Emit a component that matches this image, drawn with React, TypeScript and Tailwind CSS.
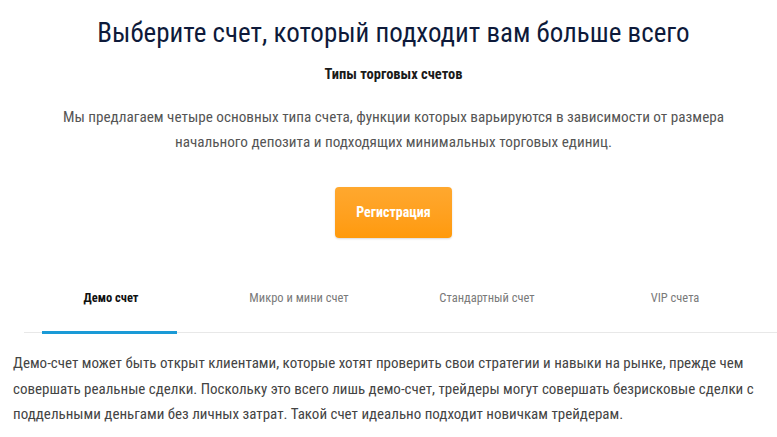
import React, { useState } from 'react';

const tabs = [
  {
    id: 'demo',
    label: 'Демо счет',
    text: 'Демо-счет может быть открыт клиентами, которые хотят проверить свои стратегии и навыки на рынке, прежде чем совершать реальные сделки. Поскольку это всего лишь демо-счет, трейдеры могут совершать безрисковые сделки с поддельными деньгами без личных затрат. Такой счет идеально подходит новичкам трейдерам.',
  },
  { id: 'micro', label: 'Микро и мини счет', text: '' },
  { id: 'standard', label: 'Стандартный счет', text: '' },
  { id: 'vip', label: 'VIP счета', text: '' },
];

export default function App() {
  const [active, setActive] = useState('demo');
  const current = tabs.find((t) => t.id === active)!;

  return (
    <div className="w-[777px] h-[437px] overflow-hidden bg-white font-['Roboto_Condensed','Roboto',sans-serif]">
      {/* Header */}
      <div className="flex flex-col items-center text-center pl-[10px]">
        <h1 className="mt-[13px] text-[27px] leading-[40px] text-[#0e1a3a] whitespace-nowrap">
          Выберите счет, который подходит вам больше всего
        </h1>
        <h3 className="mt-[12px] text-[14.5px] leading-[20px] font-bold text-[#1a1a1a]">
          Типы торговых счетов
        </h3>
        <p className="mt-[20px] w-[680px] text-[15.2px] leading-[25px] text-[#555]">
          Мы предлагаем четыре основных типа счета, функции которых варьируются в зависимости от размера начального депозита и подходящих минимальных торговых единиц.
        </p>
        <button className="mt-[32px] w-[117px] h-[51px] rounded-[4px] bg-gradient-to-b from-[#ffa82e] to-[#ff9a0a] text-white text-[14px] font-bold shadow-[0_1px_2px_rgba(0,0,0,0.15)]">
          Регистрация
        </button>
      </div>

      {/* Tabs */}
      <div className="mt-[50px] ml-[24px] flex border-b border-[#e8e8e8]">
        {tabs.map((t) => (
          <button
            key={t.id}
            onClick={() => setActive(t.id)}
            className={`relative w-[188px] pb-[24px] text-[12.5px] leading-[20px] ${
              t.id === active ? 'text-[#111] font-bold' : 'text-[#7a7a7a]'
            }`}
          >
            <span className="block pr-[14px]">{t.label}</span>
            {t.id === active && (
              <span className="absolute left-[18px] w-[135px] -bottom-[2px] h-[3px] bg-[#1a9ad6]" />
            )}
          </button>
        ))}
      </div>

      {/* Content */}
      <p className="mt-[18px] px-[13px] text-[15px] leading-[25.5px] text-[#444]">
        {current.text}
      </p>
    </div>
  );
}
